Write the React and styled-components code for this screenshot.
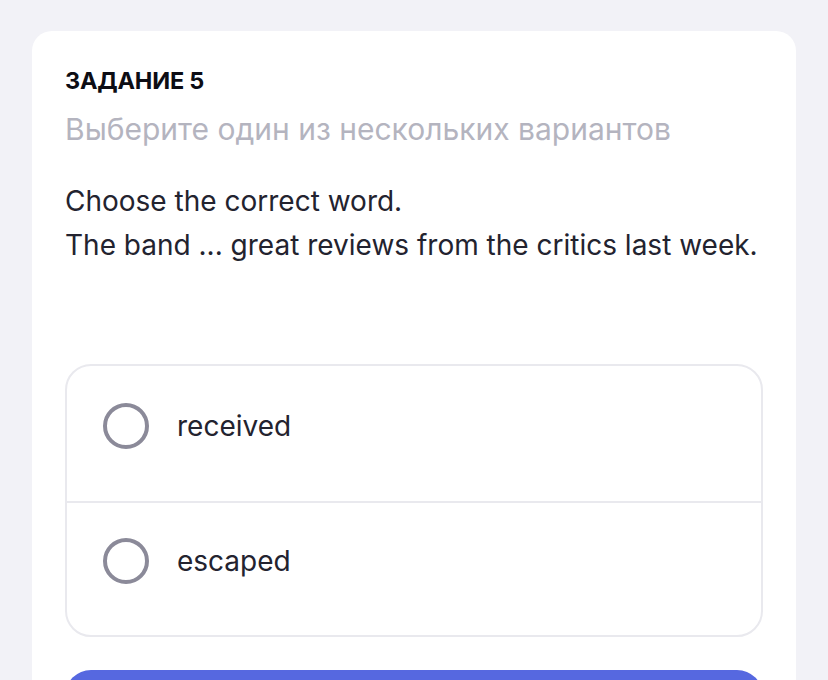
import styled, { createGlobalStyle } from "styled-components";

const Global = createGlobalStyle`
  html, body {
    margin: 0;
    padding: 0;
    background: #f2f2f7;
    font-family: Inter, "Noto Sans", sans-serif;
  }
`;

const Page = styled.main`
  padding: 31px 32px 0;
  height: 680px;
  box-sizing: border-box;
  overflow: hidden;
`;

const Card = styled.section`
  background: #fff;
  border-radius: 20px;
  padding: 36px 33px 40px;
  min-height: 700px;
  box-sizing: border-box;
`;

const TaskLabel = styled.h2`
  margin: 0;
  font-size: 23.5px;
  line-height: 28px;
  font-weight: 700;
  color: #0d0d14;
  letter-spacing: -0.2px;
`;

const Hint = styled.p`
  margin: 16px 0 0;
  font-size: 30px;
  line-height: 36px;
  color: #b4b4bf;
`;

const Question = styled.div`
  margin-top: 32px;
  font-size: 28px;
  line-height: 44px;
  color: #23232f;
`;

const Options = styled.div`
  margin-top: 97px;
  border: 2px solid #e9e9ee;
  border-radius: 26px;
  overflow: hidden;
`;

const Option = styled.label`
  display: flex;
  align-items: center;
  gap: 28px;
  height: 135px;
  padding: 0 36px 16px;
  box-sizing: border-box;
  font-size: 28px;
  color: #23232f;
  cursor: pointer;

  & + & {
    border-top: 2px solid #e9e9ee;
    height: 134px;
  }
`;

const Radio = styled.span`
  width: 46px;
  height: 46px;
  border-radius: 50%;
  border: 4px solid #8b8a99;
  box-sizing: border-box;
  flex: none;
`;

const Submit = styled.button`
  display: block;
  width: 100%;
  margin-top: 33px;
  height: 88px;
  border: none;
  border-radius: 26px;
  background: #5668e0;
  cursor: pointer;
`;

const answers = ["received", "escaped"];

export default function App() {
  return (
    <>
      <Global />
      <Page>
        <Card>
          <TaskLabel>ЗАДАНИЕ 5</TaskLabel>
          <Hint>Выберите один из нескольких вариантов</Hint>
          <Question>
            Choose the correct word.
            <br />
            The band ... great reviews from the critics last week.
          </Question>
          <Options>
            {answers.map((a) => (
              <Option key={a}>
                <Radio />
                {a}
              </Option>
            ))}
          </Options>
          <Submit aria-label="Ответить" />
        </Card>
      </Page>
    </>
  );
}
